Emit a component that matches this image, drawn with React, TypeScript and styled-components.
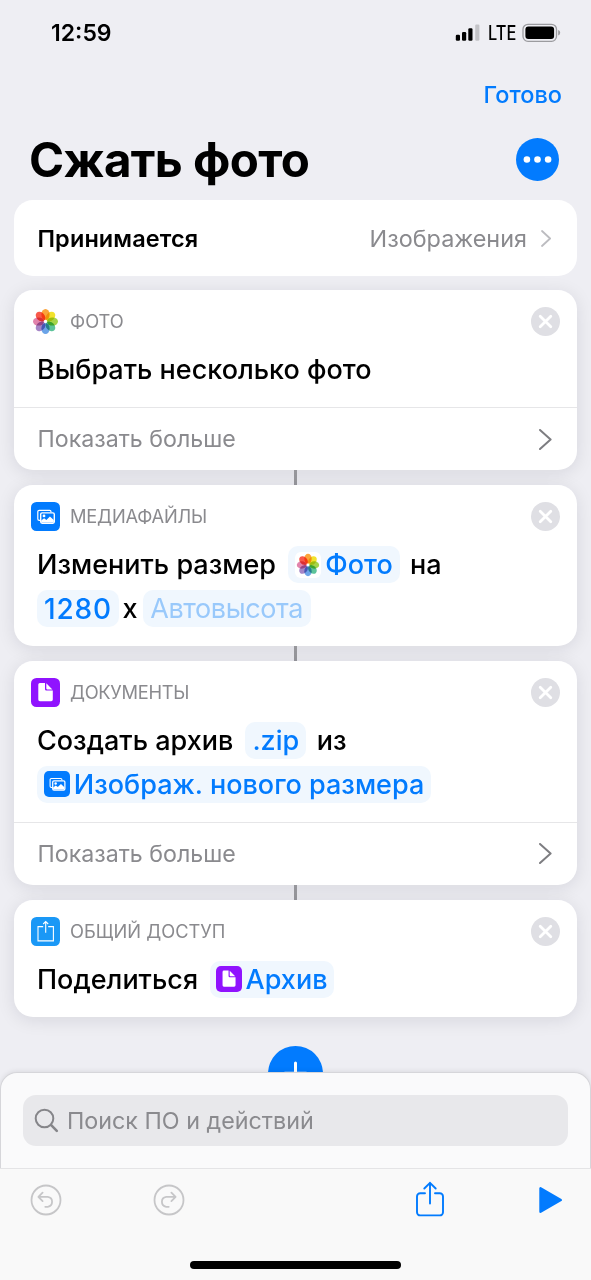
import React from 'react';
import styled, { createGlobalStyle } from 'styled-components';

const BLUE = '#027bfe';

const GlobalStyle = createGlobalStyle`
  * { box-sizing: border-box; }
  body { margin: 0; background: #eeeef3; font-family: Inter, "Liberation Sans", sans-serif; color: #000; }
`;

const Screen = styled.main`
  height: 1280px;
  width: 591px;
  display: flex;
  flex-direction: column;
  overflow: hidden;
  background: #eeeef3;
  white-space: nowrap;
`;

const StatusBar = styled.div`
  flex: none;
  height: 65px;
  display: flex;
  align-items: center;
  justify-content: space-between;
  padding: 0 29px 0 51px;
`;
const Clock = styled.span`
  font-size: 23px;
  font-weight: 600;
`;
const StatusIcons = styled.div`
  display: flex;
  align-items: center;
`;
const Network = styled.span`
  width: 27px;
  margin: 0 7px 0 6px;
  font-size: 19.5px;
  font-weight: 500;
  transform: scaleX(0.84);
  transform-origin: left;
`;

const NavBar = styled.div`
  flex: none;
  height: 59px;
  display: flex;
  align-items: center;
  justify-content: flex-end;
  padding-right: 29px;
`;
const DoneButton = styled.button`
  border: 0;
  padding: 0;
  background: none;
  color: ${BLUE};
  font: 500 23.5px Inter, sans-serif;
`;

const TitleRow = styled.div`
  flex: none;
  height: 76px;
  display: flex;
  align-items: center;
  justify-content: space-between;
  padding: 0 32px 5px 29px;
`;
const Title = styled.h1`
  margin: 0;
  font-size: 47.5px;
  font-weight: 700;
  letter-spacing: -0.6px;
`;

const Content = styled.section`
  flex: 1;
  min-height: 0;
  display: flex;
  flex-direction: column;
  align-items: center;
  overflow: hidden;
`;

const Card = styled.article<{ $flat?: boolean }>`
  flex: none;
  width: 563px;
  border-radius: 19px;
  background: #fff;
  box-shadow: ${p => (p.$flat ? 'none' : '0 3px 18px rgba(20, 20, 40, 0.1)')};
`;
const InputCard = styled(Card)`
  height: 76px;
  margin-bottom: 14px;
  padding: 0 26px 0 23.5px;
  display: flex;
  align-items: center;
`;
const InputLabel = styled.span`
  font-size: 23.5px;
  font-weight: 600;
  letter-spacing: 0.1px;
`;
const InputValue = styled.span`
  margin: 0 13.5px 0 auto;
  font-size: 23.4px;
  color: #8a8a8e;
`;

const Connector = styled.div<{ $h: number }>`
  flex: none;
  width: 3px;
  height: ${p => p.$h}px;
  background: #97979c;
`;

const CardBody = styled.div`
  padding: 17px 17px 19px;
`;
const CardHead = styled.header`
  height: 29px;
  display: flex;
  align-items: center;
  margin-bottom: 15px;
`;
const AppName = styled.span<{ $track?: number }>`
  margin: 0 auto 0 10px;
  padding-bottom: 1px;
  font-size: 18.3px;
  letter-spacing: ${p => p.$track ?? 0}px;
  color: #8a8a8e;
`;
const Lines = styled.div`
  display: flex;
  flex-direction: column;
  gap: 7px;
  padding-left: 6px;
`;
const Line = styled.div`
  height: 37px;
  display: flex;
  align-items: center;
  font-size: 27px;
  font-weight: 500;
`;
const Word = styled.span<{ $before?: number }>`
  margin-left: ${p => p.$before ?? 0}px;
`;
const Token = styled.span<{ $w: number; $before?: number; $faded?: boolean; $digits?: boolean }>`
  flex: none;
  width: ${p => p.$w}px;
  height: 37px;
  margin-left: ${p => p.$before ?? 0}px;
  border-radius: 10px;
  background: #f0f7fe;
  display: flex;
  align-items: center;
  justify-content: center;
  gap: 4px;
  font-size: ${p => (p.$digits ? 28 : 27)}px;
  letter-spacing: ${p => (p.$digits ? 0.8 : p.$faded ? -0.4 : 0)}px;
  font-weight: ${p => (p.$faded ? 400 : 500)};
  color: ${p => (p.$faded ? '#99c9fb' : BLUE)};
`;
const MoreRow = styled.div`
  height: 63px;
  padding: 0 25px 0 23.5px;
  display: flex;
  align-items: center;
  justify-content: space-between;
  border-top: 1px solid #e6e6e8;
  font-size: 23.2px;
  color: #8a8a8e;
`;

const AddButton = styled.button`
  flex: none;
  width: 55px;
  height: 55px;
  margin-top: 29px;
  padding: 0;
  border: 0;
  border-radius: 50%;
  background: ${BLUE};
`;

const Sheet = styled.section`
  flex: none;
  height: 96px;
  padding: 22px 22px 0;
  border: 1px solid #d6d6da;
  border-bottom: 0;
  border-radius: 17px 17px 0 0;
  background: #fafafb;
  box-shadow: 0 -1px 5px rgba(0, 0, 0, 0.08);
  z-index: 1;
`;
const SearchField = styled.div`
  height: 51px;
  border-radius: 13px;
  background: #e8e8eb;
  display: flex;
  align-items: center;
  gap: 8px;
  padding: 0 0 1px 11px;
  font-size: 23.3px;
  color: #8a8a8e;
`;
const Toolbar = styled.nav`
  flex: none;
  height: 65px;
  border-top: 1px solid #e4e4e6;
  background: #f9f9f9;
  padding: 0 28px 2px 30px;
  display: flex;
  align-items: center;
  z-index: 1;
`;
const ToolButton = styled.button<{ $before?: string }>`
  border: 0;
  padding: 0;
  background: none;
  display: flex;
  margin-left: ${p => p.$before ?? '0'};
`;
const HomeArea = styled.div`
  flex: none;
  height: 47px;
  padding-top: 28px;
  background: #f9f9f9;
`;
const HomeIndicator = styled.div`
  width: 211px;
  height: 8px;
  margin: 0 auto;
  border-radius: 4px;
  background: #000;
`;

const Petals = styled.g`
  ellipse { mix-blend-mode: multiply; }
`;
const PETALS = ['#fba43a', '#f2e22c', '#a5d449', '#5cc39a', '#6ba4e8', '#a585c6', '#e183ac', '#f8594a'];

const PhotosIcon = ({ size, plate }: { size: number; plate?: boolean }) => (
  <svg width={size} height={size} viewBox="0 0 29 29">
    {plate && <rect width="29" height="29" rx="6.5" fill="#fff" />}
    <Petals>
      {PETALS.map((c, i) => (
        <ellipse key={c} cx="14.5" cy="7.5" rx="4.1" ry="5.5" fill={c} transform={`rotate(${i * 45} 14.5 14.5)`} />
      ))}
    </Petals>
    <circle cx="14.5" cy="14.5" r="1.3" fill="#fff" />
  </svg>
);

const MediaIcon = ({ size }: { size: number }) => (
  <svg width={size} height={size} viewBox="0 0 29 29">
    <rect width="29" height="29" rx="5.5" fill={BLUE} />
    <path d="M9.6 18.4h-1.4a1.4 1.4 0 0 1-1.4-1.4V9.7a1.4 1.4 0 0 1 1.4-1.4h10.4a1.4 1.4 0 0 1 1.4 1.4v.5" fill="none" stroke="#fff" strokeWidth="1.2" />
    <rect x="9.7" y="10.9" width="13.6" height="10.3" rx="1.4" fill={BLUE} stroke="#fff" strokeWidth="1.4" />
    <circle cx="13" cy="13.9" r="1.4" fill="#fff" />
    <path d="M10.2 20.6v-2.1l2.9-2.2 2.3 1.6 3.5-3.4 3.9 3.5v2.6z" fill="#fff" />
  </svg>
);

const DocumentIcon = ({ size }: { size: number }) => (
  <svg width={size} height={size} viewBox="0 0 29 29">
    <rect width="29" height="29" rx="5.5" fill="#9013fe" />
    <path d="M8.9 5h5.1v6.2a1.4 1.4 0 0 0 1.4 1.4h6.4v9a1.6 1.6 0 0 1-1.6 1.6H8.9a1.6 1.6 0 0 1-1.6-1.6v-15A1.6 1.6 0 0 1 8.9 5z" fill="#fff" />
    <path d="M15.3 5.3l6.1 6.1h-5.3a.8.8 0 0 1-.8-.8z" fill="#fff" />
  </svg>
);

const ShareTileIcon = () => (
  <svg width="29" height="29" viewBox="0 0 29 29">
    <rect width="29" height="29" rx="5.5" fill="#1a98f6" />
    <path d="M12.2 9.6H7v14.3h15.4V9.6h-5.2M14.7 15.8V4.7M12.2 7l2.5-2.5L17.2 7" fill="none" stroke="#fff" strokeWidth="1.1" />
  </svg>
);

const RemoveIcon = () => (
  <svg width="29" height="29" viewBox="0 0 29 29">
    <circle cx="14.5" cy="14.5" r="14.5" fill="#dfdfe4" />
    <path d="M9.2 9.2l10.6 10.6M19.8 9.2L9.2 19.8" stroke="#fff" strokeWidth="2.8" strokeLinecap="round" />
  </svg>
);

const Chevron = ({ w, h, color, stroke }: { w: number; h: number; color: string; stroke: number }) => (
  <svg width={w} height={h} viewBox={`0 0 ${w} ${h}`}>
    <path d={`M1 1L${w - 1.4} ${h / 2}L1 ${h - 1}`} fill="none" stroke={color} strokeWidth={stroke} strokeLinecap="round" strokeLinejoin="round" />
  </svg>
);

const StepHead = ({ icon, name, track }: { icon: React.ReactNode; name: string; track?: number }) => (
  <CardHead>
    {icon}
    <AppName $track={track}>{name}</AppName>
    <RemoveIcon />
  </CardHead>
);

const ShowMore = () => (
  <MoreRow>
    Показать больше
    <Chevron w={13} h={21} color="#7d7d81" stroke={2} />
  </MoreRow>
);

export default function App() {
  return (
    <Screen>
      <GlobalStyle />
      <StatusBar>
        <Clock>12:59</Clock>
        <StatusIcons>
          <svg width="27" height="18" viewBox="0 0 27 18">
            <rect x="0.8" y="10.8" width="4.2" height="6" rx="1.2" />
            <rect x="7" y="8" width="4.2" height="8.8" rx="1.2" />
            <rect x="13.3" y="4.3" width="4.2" height="12.5" rx="1.2" />
            <rect x="20.2" y="0.6" width="4.2" height="16.2" rx="1.2" fill="#c3c3c7" />
          </svg>
          <Network>LTE</Network>
          <svg width="40" height="20" viewBox="0 0 40 20">
            <rect x="1" y="1.3" width="33.5" height="17" rx="5" fill="none" stroke="#9b9b9f" strokeWidth="1.3" />
            <rect x="3.4" y="3.6" width="28.7" height="12.4" rx="3" />
            <path d="M36.2 7v5.6q2-.8 2-2.8t-2-2.8z" fill="#9b9b9f" />
          </svg>
        </StatusIcons>
      </StatusBar>

      <NavBar>
        <DoneButton>Готово</DoneButton>
      </NavBar>

      <TitleRow>
        <Title>Сжать фото</Title>
        <svg width="43" height="43" viewBox="0 0 43 43">
          <circle cx="21.5" cy="21.5" r="21.5" fill={BLUE} />
          <circle cx="10.9" cy="21.5" r="3.3" fill="#fff" />
          <circle cx="21.5" cy="21.5" r="3.3" fill="#fff" />
          <circle cx="32.1" cy="21.5" r="3.3" fill="#fff" />
        </svg>
      </TitleRow>

      <Content>
        <InputCard $flat>
          <InputLabel>Принимается</InputLabel>
          <InputValue>Изображения</InputValue>
          <Chevron w={10.5} h={17} color="#bcbcc0" stroke={1.8} />
        </InputCard>

        <Card>
          <CardBody>
            <StepHead icon={<PhotosIcon size={29} />} name="ФОТО" />
            <Lines>
              <Line>
                <Word>Выбрать несколько фото</Word>
              </Line>
            </Lines>
          </CardBody>
          <ShowMore />
        </Card>
        <Connector $h={15} />

        <Card>
          <CardBody>
            <StepHead icon={<MediaIcon size={29} />} name="МЕДИАФАЙЛЫ" track={-0.2} />
            <Lines>
              <Line>
                <Word>Изменить размер</Word>
                <Token $w={112} $before={12}>
                  <PhotosIcon size={26} plate />
                  Фото
                </Token>
                <Word $before={10}>на</Word>
              </Line>
              <Line>
                <Token $w={82} $digits>1280</Token>
                <Word $before={3.5}>x</Word>
                <Token $w={168} $before={5} $faded>Автовысота</Token>
              </Line>
            </Lines>
          </CardBody>
        </Card>
        <Connector $h={14.5} />

        <Card>
          <CardBody>
            <StepHead icon={<DocumentIcon size={29} />} name="ДОКУМЕНТЫ" track={-0.3} />
            <Lines>
              <Line>
                <Word>Создать архив</Word>
                <Token $w={61} $before={12}>.zip</Token>
                <Word $before={10.5}>из</Word>
              </Line>
              <Line>
                <Token $w={394}>
                  <MediaIcon size={26} />
                  Изображ. нового размера
                </Token>
              </Line>
            </Lines>
          </CardBody>
          <ShowMore />
        </Card>
        <Connector $h={15} />

        <Card>
          <CardBody>
            <StepHead icon={<ShareTileIcon />} name="ОБЩИЙ ДОСТУП" />
            <Lines>
              <Line>
                <Word>Поделиться</Word>
                <Token $w={124} $before={11.5}>
                  <DocumentIcon size={26} />
                  Архив
                </Token>
              </Line>
            </Lines>
          </CardBody>
        </Card>

        <AddButton>
          <svg width="55" height="55" viewBox="0 0 55 55">
            <path d="M27.5 17v21M17 27.2h21" stroke="#fff" strokeWidth="3" strokeLinecap="round" />
          </svg>
        </AddButton>
      </Content>

      <Sheet>
        <SearchField>
          <svg width="25" height="25" viewBox="0 0 25 25" fill="none" stroke="#858589" strokeLinecap="round">
            <circle cx="10.5" cy="10.5" r="8.8" strokeWidth="2" />
            <path d="M17.2 17.2l5.6 5.6" strokeWidth="2.6" />
          </svg>
          Поиск ПО и действий
        </SearchField>
      </Sheet>
      <Toolbar>
        <ToolButton>
          <svg width="32" height="32" viewBox="0 0 32 32" fill="none" stroke="#c6c6c8" strokeWidth="1.8" strokeLinecap="round" strokeLinejoin="round">
            <circle cx="16" cy="16" r="14.5" />
            <path d="M12.6 8.7L8.4 12.9l4.2 4.2M8.6 12.9h9.2a5 5 0 0 1 0 9.9h-2.5" />
          </svg>
        </ToolButton>
        <ToolButton $before="91px">
          <svg width="32" height="32" viewBox="0 0 32 32" fill="none" stroke="#c6c6c8" strokeWidth="1.8" strokeLinecap="round" strokeLinejoin="round">
            <circle cx="16" cy="16" r="14.5" />
            <path d="M18.4 8.7l4.2 4.2-4.2 4.2M22.4 12.9h-9.2a5 5 0 0 0 0 9.9h2.5" />
          </svg>
        </ToolButton>
        <ToolButton $before="auto">
          <svg width="30" height="38" viewBox="0 0 30 38" fill="none" stroke={BLUE} strokeWidth="1.9" strokeLinecap="round" strokeLinejoin="round">
            <path d="M10 12.2H5.2a3.2 3.2 0 0 0-3.2 3.2v15.8a3.2 3.2 0 0 0 3.2 3.2h19.6a3.2 3.2 0 0 0 3.2-3.2V15.4a3.2 3.2 0 0 0-3.2-3.2H20M15 22.500V1.800M9.300 7.500L15 1.800l5.700 5.700" />
          </svg>
        </ToolButton>
        <ToolButton $before="93px">
          <svg width="25" height="28" viewBox="0 0 25 28">
            <path d="M2.500 2.300v23.400L22.800 14z" fill={BLUE} stroke={BLUE} strokeWidth="2.400" strokeLinejoin="round" />
          </svg>
        </ToolButton>
      </Toolbar>
      <HomeArea>
        <HomeIndicator />
      </HomeArea>
    </Screen>
  );
}
